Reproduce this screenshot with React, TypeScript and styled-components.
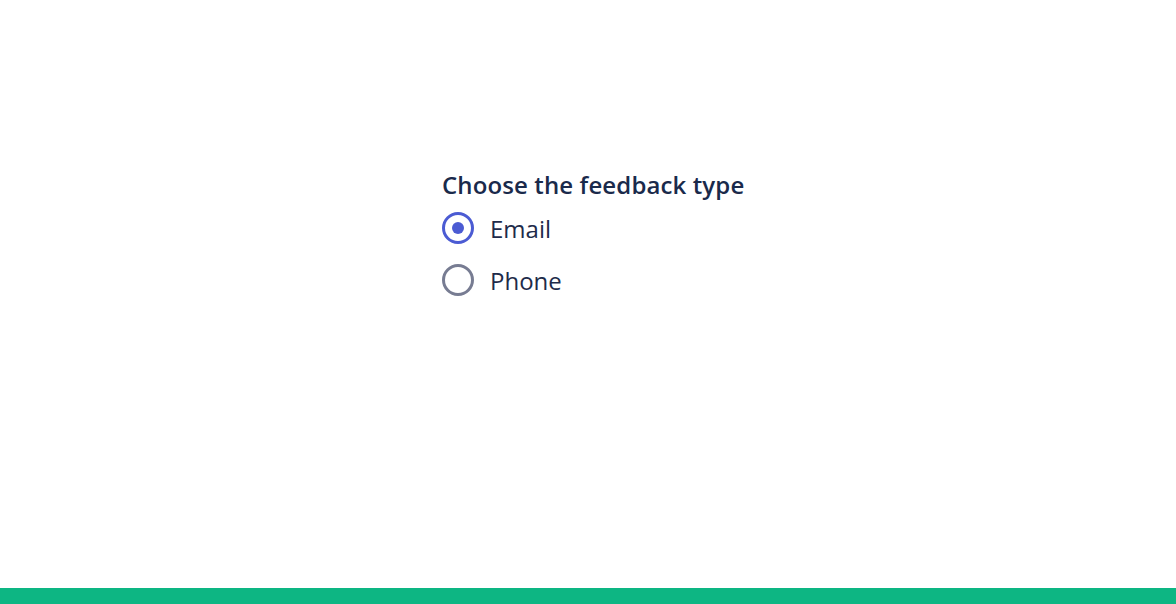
import styled, { createGlobalStyle } from "styled-components";
import { useState } from "react";

const GlobalStyle = createGlobalStyle`
  html, body {
    margin: 0;
    padding: 0;
    background: #ffffff;
    font-family: "Open Sans", "Noto Sans", sans-serif;
  }
`;

const options = [
  { value: "email", label: "Email" },
  { value: "phone", label: "Phone" },
];

const App = () => {
  const [selected, setSelected] = useState("email");

  return (
    <Page>
      <GlobalStyle />
      <Main>
        <Fieldset>
          <Legend>Choose the feedback type</Legend>
          <Options>
            {options.map((option) => (
              <Option key={option.value}>
                <HiddenInput
                  type="radio"
                  name="feedback"
                  value={option.value}
                  checked={selected === option.value}
                  onChange={() => setSelected(option.value)}
                />
                <Circle $checked={selected === option.value} />
                <Label>{option.label}</Label>
              </Option>
            ))}
          </Options>
        </Fieldset>
      </Main>
      <Bar />
    </Page>
  );
};

export default App;

const Page = styled.div`
  height: 604px;
  display: flex;
  flex-direction: column;
`;

const Main = styled.main`
  flex: 1;
  padding: 169px 0 0 442px;
`;

const Fieldset = styled.fieldset`
  border: none;
  margin: 0;
  padding: 0;
`;

const Legend = styled.legend`
  padding: 0;
  margin: 0 0 11px 0;
  font-size: 24px;
  line-height: 32px;
  font-weight: 600;
  letter-spacing: 0.12px;
  color: #1a2a4b;
`;

const Options = styled.div`
  display: flex;
  flex-direction: column;
  gap: 20px;
`;

const Option = styled.label`
  display: flex;
  align-items: center;
  gap: 16px;
  height: 32px;
  cursor: pointer;
`;

const HiddenInput = styled.input`
  position: absolute;
  opacity: 0;
  width: 0;
  height: 0;
  margin: 0;
`;

const Circle = styled.span<{ $checked: boolean }>`
  width: 32px;
  height: 32px;
  box-sizing: border-box;
  border-radius: 50%;
  border: 3px solid ${({ $checked }) => ($checked ? "#4b5bd3" : "#777c92")};
  display: flex;
  align-items: center;
  justify-content: center;

  &::after {
    content: "";
    width: 12px;
    height: 12px;
    border-radius: 50%;
    background: #4b5bd3;
    display: ${({ $checked }) => ($checked ? "block" : "none")};
  }
`;

const Label = styled.span`
  font-size: 24px;
  line-height: 32px;
  padding-top: 2px;
  color: #1e2b4a;
`;

const Bar = styled.footer`
  height: 16px;
  background-color: #0db683;
`;
